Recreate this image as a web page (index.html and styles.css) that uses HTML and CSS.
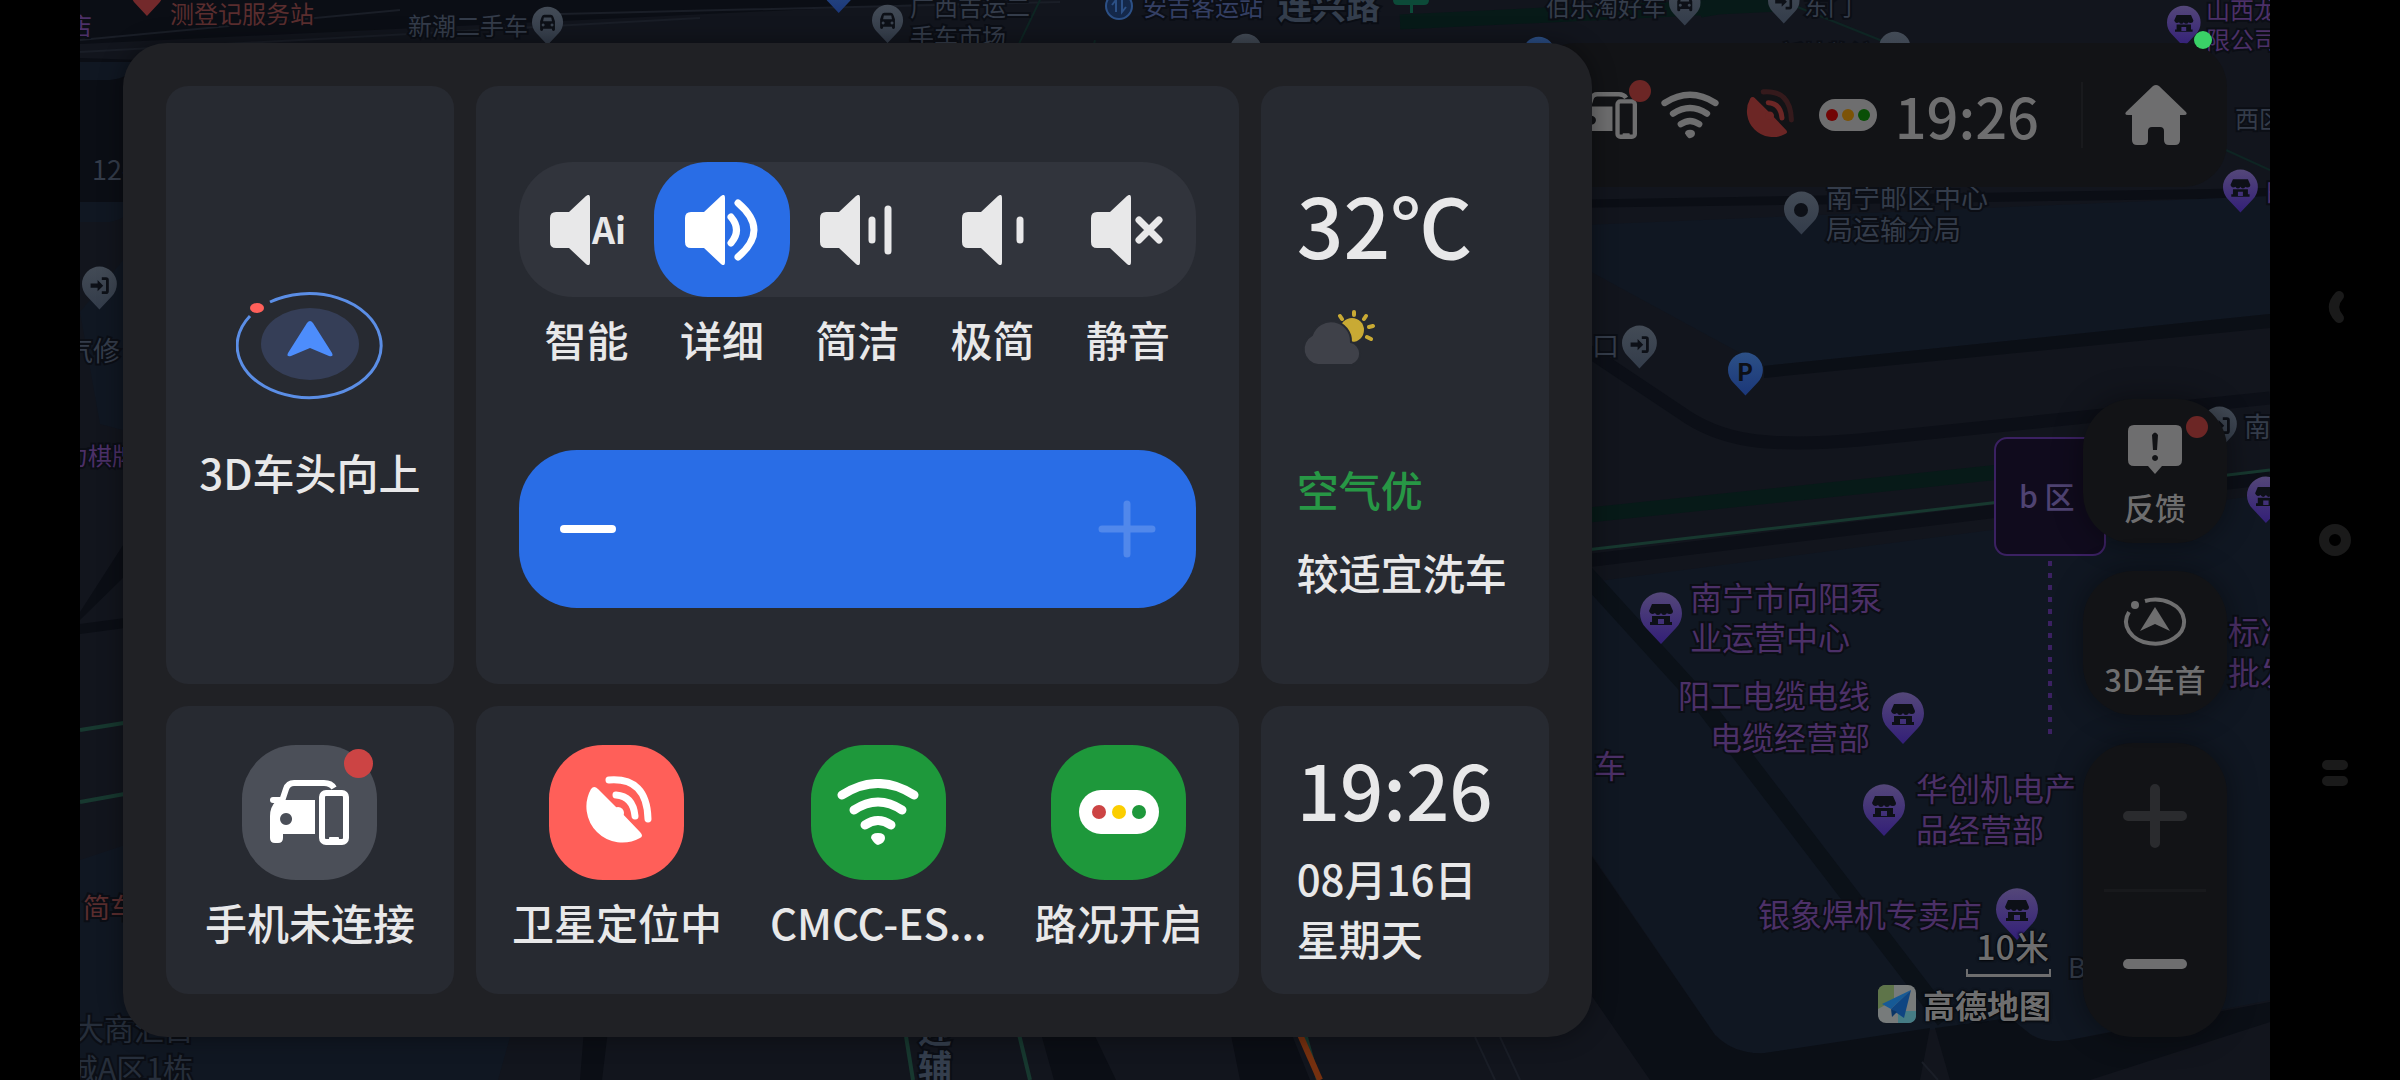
FILE: index.html
```html
<!DOCTYPE html>
<html lang="zh-CN">
<head>
  <meta charset="UTF-8">
  <meta name="viewport" content="width=device-width, initial-scale=1.0">
  <title>高德地图</title>
  <link rel="stylesheet" href="styles.css">
</head>
<body>
  <!-- shared icons -->
  <svg class="defs" width="0" height="0" aria-hidden="true">
    <defs>
      <linearGradient id="pin-purple" x1="0" y1="0" x2="0" y2="1">
        <stop offset="0" stop-color="#544779"/>
        <stop offset="1" stop-color="#331f78"/>
      </linearGradient>
      <linearGradient id="pin-gray" x1="0" y1="0" x2="0" y2="1">
        <stop offset="0" stop-color="#434b56"/>
        <stop offset="1" stop-color="#333c4a"/>
      </linearGradient>
      <linearGradient id="pin-blue" x1="0" y1="0" x2="0" y2="1">
        <stop offset="0" stop-color="#2c5086"/>
        <stop offset="1" stop-color="#1b3779"/>
      </linearGradient>

      <path id="pin" d="M21 50L6 34A21 21 0 1 1 36 34Z"/>
      <g id="shop">
        <path d="M12 10h18l3 7q0 3-3 3t-3-1q-1 2-3 2t-3-2q-1 2-3 2t-3-2q-1 1-3 1t-3-3z"/>
        <path d="M12 22h18v6h2v3H10v-3h2zm6 3v5h6v-5z" fill-rule="evenodd"/>
      </g>
      <g id="car">
        <path d="M13 12q1-3 4-3h8q3 0 4 3l2 6v11q0 2-2 2t-2-2v-1H15v1q0 2-2 2t-2-2V18zm3 1l-1 5h12l-1-5zm-1 8a2 2 0 1 0 .1 0zm12 0a2 2 0 1 0 .1 0z" fill-rule="evenodd"/>
      </g>
      <path id="enter" d="M8 18h10v-5l8 8-8 8v-5H8zM24 9h6q4 0 4 4v16q0 4-4 4h-6v-4h6V13h-6z"/>

      <symbol id="i-speaker" viewBox="0 0 40 70">
        <path d="M6 17h13L36 1q4-3 4 2v64q0 5-4 2L19 53H6q-6 0-6-6V23q0-6 6-6z"/>
      </symbol>
      <symbol id="i-satellite" viewBox="0 0 70 72">
        <path d="M9 13q3-4 7 0l20 20 22 23q4 4 0 6A36 36 0 0 1 9 13z"/>
        <circle cx="36" cy="37" r="6"/>
        <path d="M34 19Q51 20 53 40" fill="none" stroke="currentColor" stroke-width="7" stroke-linecap="round"/>
        <path class="far-wave" d="M27 4Q65 1 66 43" fill="none" stroke="currentColor" stroke-width="7" stroke-linecap="round"/>
      </symbol>
      <symbol id="i-wifi" viewBox="0 0 82 66">
        <g fill="none" stroke="currentColor" stroke-width="9" stroke-linecap="round">
          <path d="M5 16Q41-7 77 16"/>
          <path d="M17 31Q41 15 65 31"/>
          <path d="M28 46Q41 37 54 46"/>
        </g>
        <path d="M34 59q0-5 7-5t7 5-7 7q-3 0-7-7z"/>
      </symbol>
      <symbol id="i-link" viewBox="0 0 79 65">
        <path d="M12 21l4-12q2-6 8-6h30q7 0 10 5" fill="none" stroke="currentColor" stroke-width="6"/>
        <rect x="0" y="17" width="13" height="6" rx="3"/>
        <path d="M14 20h31v34H13v4q0 5-5 5H5q-5 0-5-5V36q0-9 6-15zm2 13a6 6 0 1 0 .1 0z" fill-rule="evenodd"/>
        <rect x="52" y="13" width="24" height="49" rx="4" fill="none" stroke="currentColor" stroke-width="6"/>
        <rect x="59" y="57" width="10" height="4" rx="1"/>
      </symbol>
      <symbol id="i-home" viewBox="0 0 62 60">
        <path d="M28 1q3-2 6 0l27 26q2 3-2 3h-4v25q0 5-5 5h-6q-5 0-5-5V46q0-4-4-4h-8q-4 0-4 4v9q0 5-5 5h-6q-5 0-5-5V30H3q-4 0-2-3z"/>
      </symbol>
    </defs>
  </svg>

  <div class="device">
    <main class="stage">

      <svg class="map" viewBox="80 0 2190 1080" preserveAspectRatio="xMaxYMid slice">
        <!-- blocks and roads -->
        <rect class="ground" x="80" width="2190" height="1080"/>
        <path class="dark" d="M80 44L1000 0H80zM80 210h60V60L80 58z"/>
        <path class="line" d="M80 40L400 10M80 52L700 18M560 14L1060 2M1100 90L1560 60"/>
        <path class="block" d="M80 62h60q-10 16-30 18H80zM80 202h60q-10 16-30 20H80zM80 312l50-60v180l-30-8z"/>
        <path class="dark" d="M80 612l45-70v34l-45 44zM80 624l45-6v10l-45 6z"/>
        <path class="block" d="M80 860l60-20v240H80zM80 1030h432l-14 50H80z"/>
        <path class="green-line" d="M80 730l50-8M80 802l50-9"/>
        <path class="dark" d="M584 1030h24l-6 50h-22zM1040 1030h52l24 50h-62zM1230 1030h60l20 50h-70z"/>
        <path class="green-line" d="M905 1030l8 50M1018 1030l12 50M1304 1030l14 50"/>
        <path class="green-line dim" d="M1040 0l-24 50M1095 40l-10 40M1790 4l110 44M2226 150l44 20"/>
        <path class="orange-line" d="M1298 1030l22 50"/>
        <path class="green-band" d="M1400 22L1780 4M1700 10l60-10"/>
        <path class="dark" d="M1560 200L2270 188v10L1560 208z"/>
        <path class="block" d="M1560 226L2270 196V314L1764 366 1560 255z"/>
        <path class="shade" d="M1764 366L2270 314v14L1764 378z"/>
        <path class="road" d="M1560 332l120 80q30 22 70 28t110 0L2270 398"/>
        <path class="green-band" d="M1560 518L2000 472"/>
        <path class="road" d="M1560 564L2270 478"/>
        <path class="green-line thin" d="M1560 553L2000 502 2270 470"/>
        <path class="block" d="M1560 586L2270 494V1000L2070 1040q-26 4-40-6l-20-16-80 12-165 23q-30 2-50-18L1592 855h-32z"/>
        <path class="shade" d="M1560 810L1715 1035q20 20 50 18l165-25-10 52H1650L1560 950z"/>
        <path class="shade" d="M1935 1028l75-10 20 16q14 10 40 6l200-38v20l-180 58H1950z"/>
        <path class="path" d="M1580 568L1700 700 1945 1020"/>
        <path class="line" d="M1475 1037l20 43M1500 1037l20 43M1922 1062l16 18"/>

        <!-- zone sign -->
        <rect class="zone" x="1995" y="438" width="110" height="117" rx="12"/>
        <path class="zone-stem" d="M2050 561v174"/>
        <text class="zone-text" x="2019" y="508">b 区</text>

        <!-- place pins -->
        <g fill="url(#pin-purple)">
          <use href="#pin" x="1640" y="594"/>
          <use href="#pin" x="1882" y="694"/>
          <use href="#pin" x="1863" y="786"/>
          <use href="#pin" x="1996" y="890"/>
          <use href="#pin" transform="translate(2167 7) scale(.8)"/>
          <use href="#pin" transform="translate(2223 171) scale(.83)"/>
          <use href="#pin" transform="translate(2247 478) scale(.9)"/>
        </g>
        <g class="pin-glyph">
          <use href="#shop" x="1640" y="594"/>
          <use href="#shop" x="1882" y="694"/>
          <use href="#shop" x="1863" y="786"/>
          <use href="#shop" x="1996" y="890"/>
          <use href="#shop" transform="translate(2167 7) scale(.8)"/>
          <use href="#shop" transform="translate(2223 171) scale(.83)"/>
          <use href="#shop" transform="translate(2247 478) scale(.9)"/>
        </g>
        <g fill="url(#pin-gray)">
          <use href="#pin" transform="translate(1784 193) scale(.83)"/>
          <use href="#pin" transform="translate(1622 327) scale(.83)"/>
          <use href="#pin" transform="translate(2202 408) scale(.83)"/>
          <use href="#pin" transform="translate(82 268) scale(.83)"/>
          <use href="#pin" transform="translate(532 8) scale(.74)"/>
          <use href="#pin" transform="translate(872 6) scale(.74)"/>
          <use href="#pin" transform="translate(1669 -12) scale(.75)"/>
          <use href="#pin" transform="translate(1768 -14) scale(.75)"/>
          <use href="#pin" transform="translate(1230 35) scale(.75)"/>
          <use href="#pin" transform="translate(1879 33) scale(.75)"/>
        </g>
        <g class="pin-glyph">
          <circle cx="1801" cy="210" r="7"/>
          <use href="#enter" transform="translate(1625 330) scale(.7)"/>
          <use href="#enter" transform="translate(2206 411) scale(.7)"/>
          <use href="#enter" transform="translate(85 271) scale(.7)"/>
          <use href="#car" transform="translate(532 8) scale(.74)"/>
          <use href="#car" transform="translate(872 6) scale(.74)"/>
          <use href="#car" transform="translate(1669 -12) scale(.75)"/>
          <use href="#enter" transform="translate(1770 -12) scale(.65)"/>
        </g>
        <use href="#pin" fill="url(#pin-blue)" transform="translate(1728 354) scale(.83)"/>
        <text class="parking" x="1745" y="381">P</text>
        <use href="#pin" fill="url(#pin-blue)" transform="translate(824 -22) scale(.7)"/>
        <use href="#pin" fill="url(#pin-blue)" transform="translate(1523 38) scale(.75)"/>
        <use href="#pin" fill="#73292b" transform="translate(131 -22) scale(.76)"/>
        <circle class="transit" cx="1119" cy="6" r="13"/>
        <path class="transit" d="M1116 12V0l-4 5M1122 0v12l4-5"/>
        <path d="M1393-6h36v6q0 5-5 5h-11v8h-3V5h-12q-5 0-5-5z" fill="#0c4a38"/>

        <!-- place names -->
        <g class="name shop-name">
          <text x="1690" y="610">南宁市向阳泵</text>
          <text x="1690" y="650">业运营中心</text>
          <text x="1870" y="708" text-anchor="end">阳工电缆电线</text>
          <text x="1870" y="750" text-anchor="end">电缆经营部</text>
          <text x="1916" y="801">华创机电产</text>
          <text x="1916" y="842">品经营部</text>
          <text x="1982" y="927" text-anchor="end">银象焊机专卖店</text>
          <text x="1594" y="778">车</text>
          <text x="2228" y="644">标准</text>
          <text x="2228" y="685">批发</text>
        </g>
        <g class="name shop-name small">
          <text x="2206" y="19">山西龙</text>
          <text x="2206" y="49">限公司</text>
          <text x="2264" y="201">日</text>
          <text x="68" y="35">店</text>
          <text x="64" y="465">力棋牌</text>
        </g>
        <g class="name gray-name">
          <text x="1826" y="208">南宁邮区中心</text>
          <text x="1826" y="240">局运输分局</text>
          <text x="2244" y="437">南</text>
          <text x="1592" y="356">口</text>
          <text x="66" y="361">气修</text>
          <text x="2068" y="978">B</text>
          <text x="92" y="180">12#</text>
        </g>
        <g class="name gray-name estate">
          <text x="74" y="1040">大商汇首</text>
          <text x="68" y="1080">城A区1栋</text>
        </g>
        <g class="name gray-name small">
          <text x="408" y="35">新潮二手车</text>
          <text x="910" y="16">广西吉运二</text>
          <text x="910" y="46">手车市场</text>
          <text x="1546" y="16">伯乐淘好车</text>
          <text x="1804" y="15">东门</text>
          <text x="1780" y="63">新捷物流</text>
          <text x="2235" y="128">西区</text>
        </g>
        <text class="name bus-name small" x="1143" y="16">安吉客运站</text>
        <text class="name road-name" x="1278" y="19">连兴路</text>
        <text class="name road-name" x="918" y="1043">迎</text>
        <text class="name road-name" x="918" y="1080">辅</text>
        <text class="name red-name small" x="170" y="23">测登记服务站</text>
        <text class="name red-name" x="83" y="918">简车</text>
      </svg>

      <div class="content">
        <!-- quick settings panel -->
        <section class="panel">
          <button class="card view-card">
            <svg width="148" height="108" viewBox="0 0 148 108" aria-hidden="true">
              <path d="M34 10A72 52 0 1 1 14 24" fill="none" stroke="#5b8ee6" stroke-width="3"/>
              <ellipse cx="74" cy="52" rx="49" ry="36" fill="#353e57"/>
              <path d="M71 31q3-4 6 0l19 30q2 4-3 3l-19-8-19 8q-5 1-3-3z" fill="#4d8dfc"/>
              <ellipse cx="21" cy="16" rx="7" ry="5" fill="#ff605a"/>
            </svg>
            <span class="label">3D车头向上</span>
          </button>

          <div class="card voice-card">
            <div class="voice">
              <div class="modes">
                <button class="mode" aria-labelledby="m1">
                  <svg width="74" height="70"><use href="#i-speaker" width="40" height="70"/><text class="ai" x="42" y="49">Ai</text></svg>
                </button>
                <button class="mode active" aria-labelledby="m2">
                  <svg width="74" height="70"><use href="#i-speaker" width="40" height="70"/><path d="M46 22q11 13 0 26M53 8q32 27 0 54"/></svg>
                </button>
                <button class="mode" aria-labelledby="m3">
                  <svg width="74" height="70"><use href="#i-speaker" width="40" height="70"/><path d="M52 25v20M68 14v42"/></svg>
                </button>
                <button class="mode" aria-labelledby="m4">
                  <svg width="62" height="70"><use href="#i-speaker" width="40" height="70"/><path d="M58 25v20"/></svg>
                </button>
                <button class="mode" aria-labelledby="m5">
                  <svg width="74" height="70"><use href="#i-speaker" width="40" height="70"/><path d="M48 25l20 20M68 25L48 45"/></svg>
                </button>
              </div>
              <div class="mode-names">
                <span id="m1">智能</span>
                <span id="m2">详细</span>
                <span id="m3">简洁</span>
                <span id="m4">极简</span>
                <span id="m5">静音</span>
              </div>
            </div>
            <div class="volume">
              <button aria-label="减小音量">
                <svg width="58" height="58"><path d="M5 29h48" stroke-width="8"/></svg>
              </button>
              <button aria-label="增大音量" disabled>
                <svg width="58" height="58"><path d="M4 29h50M29 4v50" stroke-width="7"/></svg>
              </button>
            </div>
          </div>

          <div class="card weather-card">
            <div class="now">
              <div class="big temp">32℃</div>
              <svg width="74" height="56" viewBox="0 0 74 56" aria-hidden="true">
                <circle cx="51" cy="20" r="12" fill="#c9aa34"/>
                <path d="M53 2v3M39 6l2 3M65 6l-2 3M68 17l4-1M66 27l4 2" stroke="#c9aa34" stroke-width="4" stroke-linecap="round"/>
                <path d="M17 55a16 16 0 0 1-6-30 20 20 0 0 1 39 7 12 12 0 0 1 1 23z" fill="#3f4149" stroke="#272a31" stroke-width="2"/>
              </svg>
            </div>
            <div class="advice">
              <div class="air">空气优</div>
              <div>较适宜洗车</div>
            </div>
          </div>

          <div class="card phone-card">
            <button class="tile">
              <span class="tile-icon gray">
                <svg width="79" height="65"><use href="#i-link"/></svg>
                <i class="dot"></i>
              </span>
              <span class="label">手机未连接</span>
            </button>
          </div>

          <div class="card tiles-card">
            <button class="tile">
              <span class="tile-icon red"><svg width="70" height="72"><use href="#i-satellite"/></svg></span>
              <span class="label">卫星定位中</span>
            </button>
            <button class="tile">
              <span class="tile-icon green"><svg width="82" height="66"><use href="#i-wifi"/></svg></span>
              <span class="label">CMCC-ES...</span>
            </button>
            <button class="tile">
              <span class="tile-icon green">
                <svg width="80" height="44" viewBox="0 0 80 44">
                  <rect width="80" height="44" rx="22"/>
                  <circle cx="20" cy="22" r="7" fill="#cc4444"/>
                  <circle cx="40" cy="22" r="7" fill="#fbce00"/>
                  <circle cx="60" cy="22" r="7" fill="#1e983b"/>
                </svg>
              </span>
              <span class="label">路况开启</span>
            </button>
          </div>

          <div class="card clock-card">
            <div class="big">19:26</div>
            <div>08月16日</div>
            <div>星期天</div>
          </div>
        </section>

        <!-- status bar and map controls -->
        <div class="side">
          <header class="status">
            <span class="status-link">
              <svg width="57" height="47"><use href="#i-link"/></svg>
              <i class="dot"></i>
            </span>
            <svg width="58" height="48"><use href="#i-wifi"/></svg>
            <svg class="lost" width="52" height="52"><use href="#i-satellite"/></svg>
            <svg width="58" height="32" viewBox="0 0 58 32">
              <rect width="58" height="32" rx="16"/>
              <circle cx="13" cy="16" r="6" fill="#720504"/>
              <circle cx="29" cy="16" r="6" fill="#7c5306"/>
              <circle cx="45" cy="16" r="6" fill="#0a4f06"/>
            </svg>
            <time class="time">19:26</time>
            <button class="home" aria-label="主页"><svg width="62" height="60"><use href="#i-home"/></svg></button>
            <i class="recording"></i>
          </header>

          <div class="lower">
            <div class="legend">
              <div class="scale">10米</div>
              <div class="brand">
                <svg width="38" height="38" viewBox="0 0 38 38" aria-hidden="true">
                  <rect width="38" height="38" rx="8" fill="#777b7b"/>
                  <path d="M8 0h8v15L0 24V8q0-8 8-8z" fill="#5e7449"/>
                  <path d="M20 26h18v4q0 8-8 8H20z" fill="#457c85"/>
                  <path d="M33 5L4 19l9 5z" fill="#165a96"/>
                  <path d="M33 5L13 24l13 9z" fill="#0f4582"/>
                  <path d="M13 24l1 8 5-5z" fill="#0a3566"/>
                </svg>
                <span>高德地图</span>
              </div>
            </div>

            <div class="controls">
              <button class="control">
                <svg width="54" height="50" viewBox="0 0 54 50">
                  <path d="M6 0h42q6 0 6 6v29q0 6-6 6H34l-7 8-7-8H6q-6 0-6-6V6q0-6 6-6zm18 10l1 15h4l1-15q-3-5-6 0zm3 20a3 3 0 1 0 .1 0z" fill-rule="evenodd"/>
                </svg>
                <span>反馈</span>
                <i class="dot"></i>
              </button>
              <button class="control">
                <svg width="64" height="50" viewBox="0 0 64 50">
                  <path d="M22 4A29 22 0 1 1 6 15" fill="none" stroke="currentColor" stroke-width="4"/>
                  <path d="M32 10l15 24-15-7-15 7z"/>
                  <circle cx="12" cy="8" r="4"/>
                </svg>
                <span>3D车首</span>
              </button>
              <div class="zoom">
                <button aria-label="放大" disabled><svg width="64" height="64"><path d="M5 32h54M32 5v54" stroke-width="10"/></svg></button>
                <button aria-label="缩小"><svg width="64" height="64"><path d="M5 32h54" stroke-width="10"/></svg></button>
              </div>
            </div>
          </div>
        </div>
      </div>
    </main>

    <!-- system navigation -->
    <nav class="sysnav">
      <button aria-label="返回"><svg width="32" height="52"><path d="M20 15Q10 26 20 37" stroke-width="10"/></svg></button>
      <button aria-label="桌面"><svg width="32" height="32"><circle cx="16" cy="16" r="11" stroke-width="10"/></svg></button>
      <button aria-label="最近任务"><svg width="32" height="52"><path d="M8 18h16M8 34h16" stroke-width="10"/></svg></button>
    </nav>
  </div>
</body>
</html>
```
FILE: styles.css
```css
* {
  box-sizing: border-box;
}
body {
  margin: 0;
  background-color: #000;
  color: #e8e8e9;
  font-family: "Noto Sans CJK SC", "Noto Sans", sans-serif;
  font-size: 42px;
  font-weight: 500;
  line-height: 60px;
}
button {
  padding: 0;
  border: none;
  background: none;
  color: inherit;
  font: inherit;
  cursor: pointer;
}
svg {
  display: block;
  fill: currentColor;
}
.defs {
  position: absolute;
}
.device {
  display: grid;
  grid-template-columns: 80px 1fr 130px;
  min-height: 100vh;
}
.stage {
  grid-column: 2;
  position: relative;
  display: flex;
  overflow: hidden;
}

/* map */
.map {
  position: absolute;
  inset: 0;
  width: 100%;
  height: 100%;
}
.ground { fill: #12151d; }
.block { fill: #101722; }
.dark { fill: #0b0e15; }
.shade { fill: #0b0f16; }
.road, .path, .line, .green-line, .green-band, .orange-line {
  fill: none;
}
.road { stroke: #0c0f17; stroke-width: 13; }
.path { stroke: #0b1118; stroke-width: 18; }
.line { stroke: #1a1e27; stroke-width: 2; }
.green-line { stroke: #17382f; stroke-width: 4; }
.green-line.thin { stroke-width: 3; }
.green-line.dim { stroke: #0e2523; stroke-width: 2; }
.green-band { stroke: #071a18; stroke-width: 15; }
.orange-line { stroke: #75300f; stroke-width: 6; }
.zone {
  fill: #100b1d;
  stroke: #3b2162;
  stroke-width: 2;
}
.zone-stem {
  fill: none;
  stroke: #3b2162;
  stroke-width: 4;
  stroke-dasharray: 5 7;
}
.zone-text {
  fill: #4f4372;
  font-size: 30px;
}
.pin-glyph {
  fill: #0d1017;
}
.parking {
  fill: #0d1017;
  font-size: 24px;
  font-weight: 700;
  text-anchor: middle;
}
.transit {
  fill: #14284a;
  stroke: #2c5086;
  stroke-width: 2;
}
.name {
  font-size: 27px;
  font-weight: 400;
  stroke: #0b0e15;
  stroke-width: 4;
  paint-order: stroke;
}
.shop-name { fill: #4c3068; font-size: 32px; }
.gray-name { fill: #343c4a; }
.bus-name { fill: #343f63; }
.red-name { fill: #5a2d2e; }
.road-name { fill: #343e4d; font-size: 34px; font-weight: 700; }
.estate { fill: #262e3b; font-size: 30px; }
.small { font-size: 24px; }

/* page layout */
.content {
  position: relative;
  flex: 1;
  display: flex;
  padding: 43px;
}
.panel {
  position: relative;
  z-index: 1;
  flex: 0 0 69.8%;
  display: grid;
  grid-template-columns: 288fr 763fr 288fr;
  grid-template-rows: 598fr 288fr;
  gap: 22px;
  padding: 43px;
  border-radius: 44px;
  background-color: #202125;
  box-shadow: 0 0 24px rgba(0, 0, 0, 0.4);
}
.card {
  min-width: 0;
  border-radius: 22px;
  background-color: #272a31;
}
.label {
  white-space: nowrap;
}
.big {
  font-size: 76px;
  line-height: 80px;
}
.temp {
  font-size: 82px;
}
.dot {
  position: absolute;
  width: 22px;
  height: 22px;
  border-radius: 50%;
  background-color: #6c2625;
}

.view-card {
  display: flex;
  flex-direction: column;
  align-items: center;
  justify-content: center;
  gap: 42px;
  padding-top: 24px;
}
.voice-card {
  display: flex;
  flex-direction: column;
  justify-content: space-between;
  padding: 76px 43px;
}
.modes {
  display: grid;
  grid-template-columns: repeat(5, 1fr);
  border-radius: 54px;
  background-color: #31343c;
}
.mode {
  display: flex;
  align-items: center;
  justify-content: center;
  height: 135px;
  border-radius: 54px;
}
.mode.active {
  background-color: #296de6;
  color: #fff;
}
.mode path {
  fill: none;
  stroke: currentColor;
  stroke-width: 7;
  stroke-linecap: round;
}
.ai {
  font-family: "Liberation Sans Narrow", "Noto Sans CJK SC", sans-serif;
  font-size: 36px;
  font-weight: 700;
}
.mode-names {
  display: grid;
  grid-template-columns: repeat(5, 1fr);
  margin-top: 12px;
  text-align: center;
}
.volume {
  display: flex;
  align-items: center;
  justify-content: space-between;
  height: 158px;
  padding: 0 40px;
  border-radius: 58px;
  background-color: #296de6;
  color: #fff;
}
.volume path, .zoom path {
  stroke: currentColor;
  stroke-linecap: round;
}
.volume button:disabled {
  color: #5188eb;
}
.weather-card {
  display: flex;
  flex-direction: column;
  justify-content: space-between;
  padding: 98px 36px 82px;
}
.weather-card svg {
  margin: 46px 0 0 4px;
}
.advice {
  display: flex;
  flex-direction: column;
  gap: 23px;
  white-space: nowrap;
}
.air {
  color: #279745;
}
.phone-card, .tiles-card {
  display: flex;
  align-items: center;
  justify-content: center;
  gap: 48px;
  padding-bottom: 4px;
}
.tile {
  display: flex;
  flex-direction: column;
  align-items: center;
  gap: 12px;
}
.tile-icon {
  position: relative;
  display: flex;
  align-items: center;
  justify-content: center;
  width: 135px;
  height: 135px;
  border-radius: 54px;
  color: #fff;
}
.tile-icon.gray { background-color: #4b4f58; }
.tile-icon.red { background-color: #ff5f59; }
.tile-icon.green { background-color: #1e983b; }
.tile-icon .dot {
  top: 4px;
  right: 4px;
  width: 29px;
  height: 29px;
  background-color: #cc4444;
}
.clock-card {
  display: flex;
  flex-direction: column;
  justify-content: center;
  padding: 16px 36px 0;
  white-space: nowrap;
}
.clock-card .big {
  margin-bottom: 20px;
}

/* right side */
.side {
  flex: 1;
  display: flex;
  flex-direction: column;
  justify-content: space-between;
  min-width: 0;
  color: #6e6e6f;
}
.status {
  position: relative;
  display: flex;
  align-items: center;
  justify-content: flex-end;
  gap: 24px;
  height: 144px;
  margin-left: -60px;
  border-radius: 44px;
  background-color: #121316;
}
.status-link {
  position: relative;
}
.status-link .dot {
  top: -12px;
  right: -14px;
}
.lost {
  --far-wave: 0.4;
  color: #6c2625;
}
.far-wave {
  opacity: var(--far-wave, 1);
}
.time {
  margin-left: -6px;
  font-size: 56px;
}
.home {
  display: flex;
  align-items: center;
  height: 66px;
  margin-left: 18px;
  padding: 0 40px 0 42px;
  border-left: 2px solid #191a1d;
}
.recording {
  position: absolute;
  top: -12px;
  right: 15px;
  width: 18px;
  height: 18px;
  border-radius: 50%;
  background-color: #3ad167;
}
.lower {
  display: flex;
  align-items: flex-end;
  justify-content: flex-end;
  gap: 32px;
}
.legend {
  display: flex;
  flex-direction: column;
  align-items: flex-end;
  gap: 8px;
  margin-bottom: 14px;
  font-size: 32px;
  line-height: 38px;
  text-shadow: 0 0 3px #000, 0 0 3px #000;
}
.scale {
  width: 85px;
  height: 50px;
  border: solid #6e6e6f;
  border-width: 0 2px 3px;
  border-image: linear-gradient(transparent 42px, #6e6e6f 42px) 0 2 3;
  font-size: 34px;
  text-align: right;
}
.brand {
  display: flex;
  gap: 7px;
  font-weight: 700;
}
.controls {
  display: flex;
  flex-direction: column;
  gap: 28px;
  width: 144px;
  font-size: 31px;
  line-height: 36px;
}
.control, .zoom {
  border-radius: 50px;
  background-color: #121316;
  box-shadow: 0 0 30px rgba(0, 0, 0, 0.4);
}
.control {
  position: relative;
  display: flex;
  flex-direction: column;
  align-items: center;
  justify-content: center;
  gap: 14px;
  height: 144px;
  padding-top: 8px;
}
.control .dot {
  top: 17px;
  right: 19px;
}
.zoom {
  display: flex;
  flex-direction: column;
  height: 294px;
}
.zoom button {
  flex: 1;
  display: flex;
  align-items: center;
  justify-content: center;
  margin: 0 21px;
}
.zoom button:disabled {
  border-bottom: 3px solid #18191c;
  color: #2a2b2e;
}

.sysnav {
  display: flex;
  flex-direction: column;
  align-items: center;
  justify-content: center;
  gap: 191px;
  color: #1a1a1a;
}
.sysnav svg {
  fill: none;
  stroke: currentColor;
  stroke-linecap: round;
}
```
